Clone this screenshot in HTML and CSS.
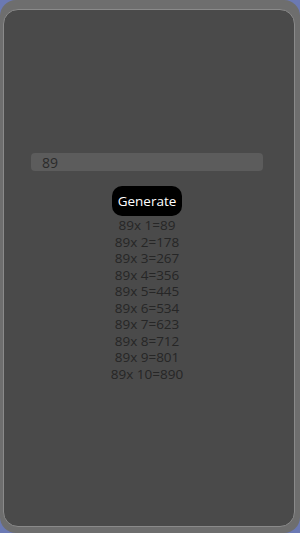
FILE: index.html
```html
<!DOCTYPE html>
<html lang="en">
<head>
  <meta charset="UTF-8">
  <title>Multiplication Table</title>
  <link rel="stylesheet" href="styles.css">
</head>
<body>

  <div class="frame">
    <div class="panel">
      <input class="number" type="text" id="num" value="89">
      <button class="generate" id="gen">Generate</button>
      <div class="table" id="table"></div>
    </div>
  </div>

  <script>
    const numEl = document.getElementById("num");
    const tableEl = document.getElementById("table");

    function generate() {
      const n = parseInt(numEl.value);
      tableEl.innerHTML = "";
      if (isNaN(n)) return;
      for (let i = 1; i <= 10; i++) {
        const row = document.createElement("div");
        row.className = "row";
        row.innerText = n + "x " + i + "=" + (n * i);
        tableEl.appendChild(row);
      }
    }

    document.getElementById("gen").addEventListener("click", generate);
    generate();
  </script>

</body>
</html>
```

FILE: styles.css
```css
html, body {
  margin: 0;
  height: 100%;
}

body {
  background: #6b79b3;
  font-family: "Open Sans", "Noto Sans", sans-serif;
}

.frame {
  box-sizing: border-box;
  height: 533px;
  background: #6e6e6e;
  border-radius: 16px;
  padding: 9px 5px 6px 3px;
}

.panel {
  box-sizing: border-box;
  height: 100%;
  background: #4a4a4a;
  border: 1px solid #8a8a8a;
  border-radius: 15px;
  display: flex;
  flex-direction: column;
  align-items: center;
  padding: 143px 31px 0 27px;
}

.number {
  box-sizing: border-box;
  width: 232px;
  height: 18px;
  background: #5c5c5c;
  border: none;
  border-radius: 4px;
  padding: 0 11px;
  font-family: inherit;
  font-size: 14px;
  color: #2b2b2b;
  outline: none;
}

.generate {
  margin-top: 15px;
  width: 70px;
  height: 30px;
  background: #000;
  color: #fff;
  border: none;
  border-radius: 10px;
  font-family: inherit;
  font-size: 13.5px;
  padding: 0;
}

.table {
  margin-top: 1px;
  text-align: center;
}

.row {
  font-size: 13.5px;
  line-height: 16.5px;
  color: #262626;
}
```
